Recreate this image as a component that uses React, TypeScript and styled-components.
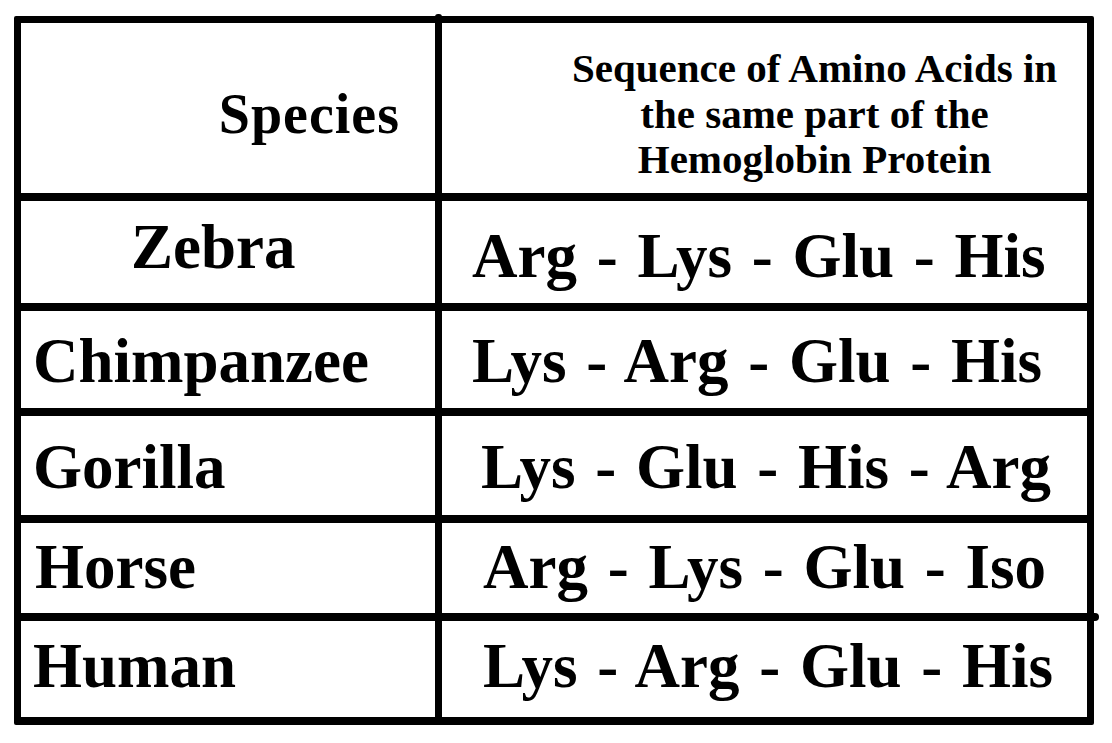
import React from "react";
import styled, { createGlobalStyle } from "styled-components";

const Global = createGlobalStyle`
  html, body { margin: 0; padding: 0; background: #ffffff; }
  body { font-family: "Liberation Serif", "Times New Roman", serif; color: #000; }
`;

const Page = styled.div`
  width: 1112px;
  height: 743px;
  padding: 16px 0 0 14px;
  box-sizing: border-box;
  background: #fff;
`;

const Table = styled.div`
  position: relative;
  width: 1080px;
  box-sizing: border-box;
  display: grid;
  grid-template-columns: 414px 645px;
  grid-template-rows: 170px 102px 97px 99px 90px 96px;
  column-gap: 7px;
  row-gap: 8px;
  padding: 7px 7px 8px 7px;
  background: #000;
  border-radius: 2px;
`;

const Cell = styled.div<{ $pl?: number; $pt?: number; $align?: string }>`
  background: #fff;
  box-sizing: border-box;
  font-weight: 700;
  font-size: 63px;
  line-height: 1;
  white-space: nowrap;
  padding-left: ${(p) => p.$pl ?? 0}px;
  padding-top: ${(p) => p.$pt ?? 0}px;
  text-align: ${(p) => p.$align ?? "left"};
`;

const SeqCell = styled(Cell)`
  word-spacing: 4px;
`;

const SpeciesHead = styled(Cell)`
  font-size: 56px;
  letter-spacing: 1px;
  text-align: right;
  padding-right: 35px;
  padding-top: 63px;
`;

const SeqHead = styled(Cell)`
  font-size: 41px;
  line-height: 45.5px;
  text-align: center;
  padding-left: 100px;
  padding-top: 23px;
`;

const Overhang = styled.div`
  position: absolute;
  left: 1073px;
  top: 597px;
  width: 12px;
  height: 8px;
  background: #000;
  border-radius: 0 4px 4px 0;
`;

const TopTick = styled.div`
  position: absolute;
  left: 421px;
  top: -2px;
  width: 7px;
  height: 4px;
  background: #000;
  border-radius: 3px 3px 0 0;
`;

type Row = { name: string; seq: string; npl: number; spl: number; npt: number; spt: number };

const rows: Row[] = [
  { name: "Zebra", seq: "Arg - Lys - Glu - His", npl: 110, spl: 30, npt: 15, spt: 24 },
  { name: "Chimpanzee", seq: "Lys - Arg - Glu - His", npl: 12, spl: 30, npt: 19, spt: 19 },
  { name: "Gorilla", seq: "Lys - Glu - His - Arg", npl: 12, spl: 39, npt: 20, spt: 20 },
  { name: "Horse", seq: "Arg - Lys - Glu - Iso", npl: 14, spl: 41, npt: 13, spt: 13 },
  { name: "Human", seq: "Lys - Arg - Glu - His", npl: 12, spl: 41, npt: 14, spt: 14 },
];

export default function App() {
  return (
    <>
      <Global />
      <Page>
        <Table>
          <TopTick />
          <SpeciesHead>Species</SpeciesHead>
          <SeqHead>
            Sequence of Amino Acids in
            <br />
            the same part of the
            <br />
            Hemoglobin Protein
          </SeqHead>
          {rows.map((r) => (
            <React.Fragment key={r.name}>
              <Cell $pl={r.npl} $pt={r.npt}>{r.name}</Cell>
              <SeqCell $pl={r.spl} $pt={r.spt}>{r.seq}</SeqCell>
            </React.Fragment>
          ))}
          <Overhang />
        </Table>
      </Page>
    </>
  );
}
